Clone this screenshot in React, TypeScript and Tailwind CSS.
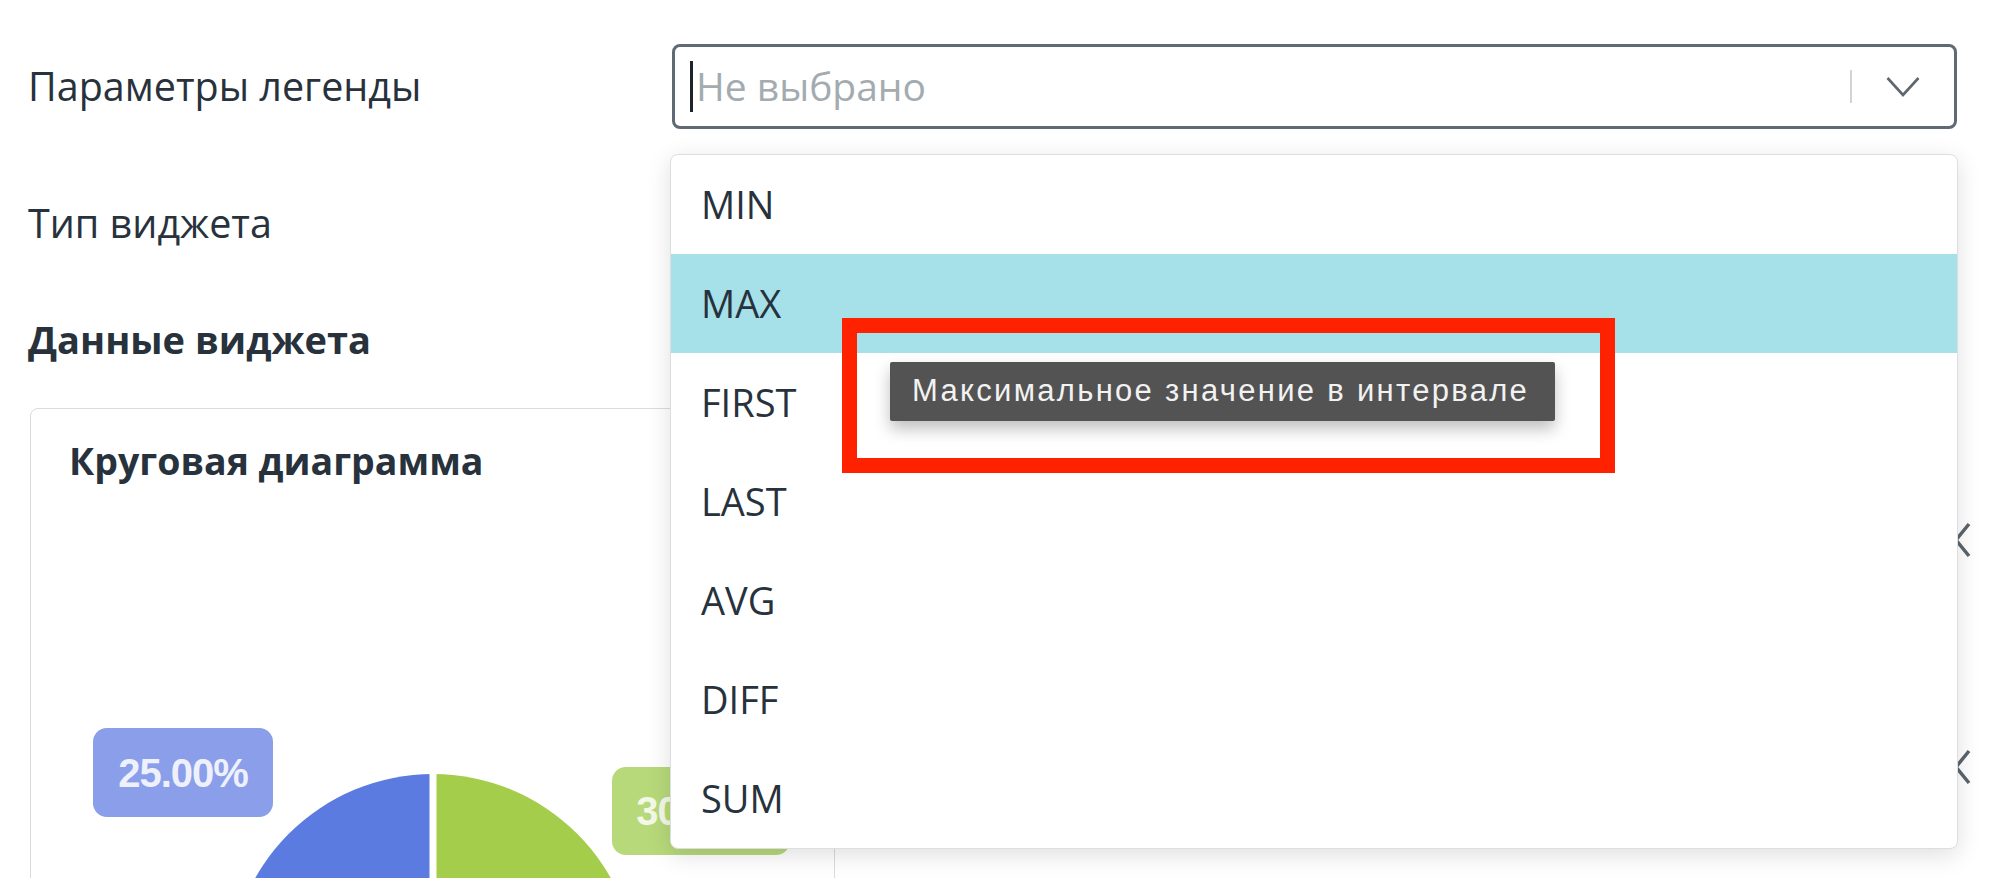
const items = ["MIN", "MAX", "FIRST", "LAST", "AVG", "DIFF", "SUM"];

const ChevronDown = () => (
  <svg width="34" height="22" viewBox="0 0 34 22" fill="none">
    <polyline points="1.5,2 17,19 32.5,2" stroke="#5f676e" strokeWidth="2.6" />
  </svg>
);

const ChevronLeft = () => (
  <svg width="18" height="36" viewBox="0 0 18 36" fill="none">
    <polyline points="16,2 3,18 16,34" stroke="#5b646c" strokeWidth="3.5" />
  </svg>
);

const LegendSelect = () => {
  return (
    <div className="relative w-[1285px]">
      <div className="flex h-[85px] items-center rounded-[8px] border-[3px] border-[#5f6a74] bg-white pl-[15px] pr-[34px]">
        <span className="h-[51px] w-[3px] bg-[#1f2328]" />
        <span className="ml-[3px] flex-1 text-[39px] text-[#a3abb0]">Не выбрано</span>
        <span className="h-[33px] w-[2px] bg-[#d0d4d7]" />
        <span className="ml-[34px] flex">
          <ChevronDown />
        </span>
      </div>

      <div className="absolute left-[-2px] top-[110px] z-10 w-[1288px] overflow-hidden rounded-[8px] border border-[#dcdfe2] bg-white shadow-[0_6px_24px_rgba(0,0,0,0.13)]">
        {items.map((it) => (
          <div
            key={it}
            className={`flex h-[99px] items-center pl-[30px] text-[38px] text-[#27323c] ${
              it === "MAX" ? "bg-[#a6e0e9]" : ""
            }`}
          >
            {it}
          </div>
        ))}
      </div>
    </div>
  );
};

const PieCard = () => {
  return (
    <div className="h-[520px] w-[805px] shrink-0 rounded-[8px] border border-[#d9dcdf] bg-white">
      <div className="pl-[38px] pt-[26px] text-[37.5px] font-bold leading-[52px] text-[#27323c]">
        Круговая диаграмма
      </div>
      <div className="relative h-[420px]">
        <svg className="absolute left-[196px] top-[285px]" width="412" height="412" viewBox="0 0 412 412">
          <path d="M206 206 L206 2 A204 204 0 0 1 410 206 Z" fill="#a3cd4a" />
          <path d="M206 206 L2 206 A204 204 0 0 1 206 2 Z" fill="#5c7be1" />
          <path d="M206 206 L206 410 A204 204 0 0 1 2 206 Z" fill="#e8a04a" />
          <line x1="206" y1="0" x2="206" y2="206" stroke="#fff" strokeWidth="7" />
        </svg>
        <div className="absolute left-[62px] top-[241px] flex h-[89px] w-[180px] items-center justify-center rounded-[14px] bg-[#8a9ee9] font-['Liberation_Sans',sans-serif] text-[40px] font-bold tracking-[-1px] text-[#eef1fc]">
          25.00%
        </div>
        <div className="absolute left-[581px] top-[280px] flex h-[88px] w-[178px] items-center justify-center rounded-[14px] bg-[#b7d97a] font-['Liberation_Sans',sans-serif] text-[40px] font-bold tracking-[-1px] text-[#f3f8e8]">
          30.00%
        </div>
      </div>
    </div>
  );
};

export default function App() {
  return (
    <div className="relative h-[878px] w-[2000px] overflow-hidden bg-white font-['Open_Sans',sans-serif] text-[#27323c]">
      <div className="flex flex-col pl-[28px] pt-[44px]">
        <div className="flex items-center">
          <div className="w-[644px] text-[39.5px]">Параметры легенды</div>
          <LegendSelect />
        </div>

        <div className="mt-[52px] flex h-[85px] items-center text-[39.5px]">Тип виджета</div>

        <div className="mt-[47px] text-[38px] font-bold leading-[52px]">Данные виджета</div>

        <div className="mt-[43px] flex pl-[2px]">
          <PieCard />
          <div className="flex flex-1 flex-col items-end pr-[29px] pt-[114px]">
            <ChevronLeft />
            <div className="mt-[191px]">
              <ChevronLeft />
            </div>
          </div>
        </div>
      </div>

      {/* tooltip shown over hovered MAX option */}
      <div className="absolute left-[890px] top-[362px] z-20 flex h-[59px] items-center rounded-[2px] bg-[#535353] pl-[22px] pr-[26px] font-['Liberation_Sans',sans-serif] text-[31px] tracking-[2.3px] text-[#f2f2f2] shadow-[0_8px_16px_rgba(0,0,0,0.25)]">
        Максимальное значение в интервале
      </div>

      {/* red highlight annotation */}
      <div className="absolute left-[842px] top-[318px] z-30 h-[155px] w-[773px] border-[15px] border-[#ff2200]" />
    </div>
  );
}
